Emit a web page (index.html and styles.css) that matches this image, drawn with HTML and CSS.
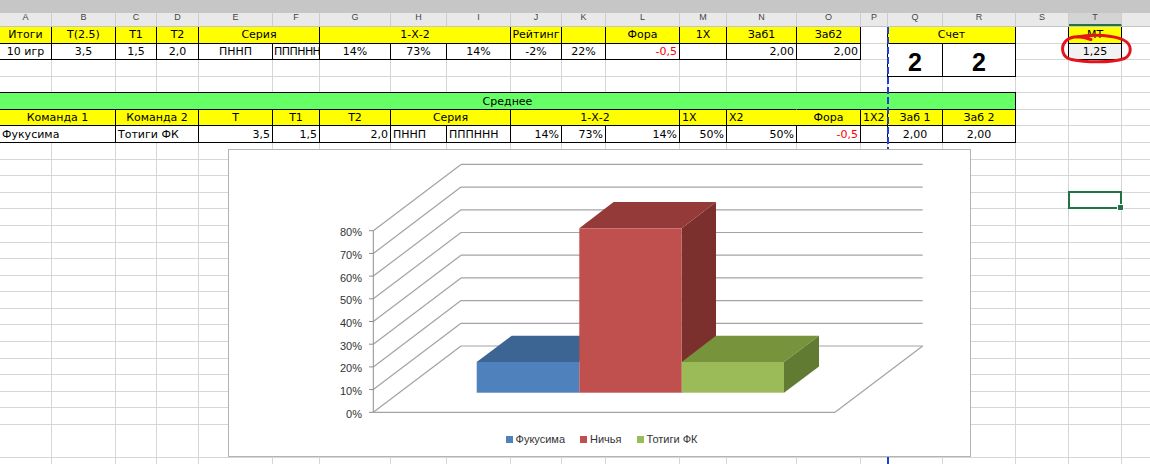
FILE: index.html
```html
<!DOCTYPE html>
<html lang="ru">
<head>
<meta charset="utf-8">
<title>Итоги</title>
<link rel="stylesheet" href="styles.css">
</head>
<body>
<div class="topbar"></div>
<div class="colhead">
  <div><span>A</span></div><div><span>B</span></div><div><span>C</span></div><div><span>D</span></div>
  <div><span>E</span></div><div><span>F</span></div><div><span>G</span></div><div><span>H</span></div>
  <div><span>I</span></div><div><span>J</span></div><div><span>K</span></div><div><span>L</span></div>
  <div><span>M</span></div><div><span>N</span></div><div><span>O</span></div><div><span>P</span></div>
  <div><span>Q</span></div><div><span>R</span></div><div><span>S</span></div><div class="hsel"><span>T</span></div>
  <div></div>
</div>
<div class="sheet">
  <div class="row row1">
    <div class="c b y">Итоги</div>
    <div class="c b y">Т(2.5)</div>
    <div class="c b y">Т1</div>
    <div class="c b y">Т2</div>
    <div class="c b y s2">Серия</div>
    <div class="c b y s3">1-Х-2</div>
    <div class="c b y">Рейтинг</div>
    <div class="c b y"></div>
    <div class="c b y">Фора</div>
    <div class="c b y">1Х</div>
    <div class="c b y">Заб1</div>
    <div class="c b y">Заб2</div>
    <div class="c"></div>
    <div class="c b y s2">Счет</div>
    <div class="c"></div>
    <div class="c b y">МТ</div>
  </div>
  <div class="row row2">
    <div class="c b">10 игр</div>
    <div class="c b">3,5</div>
    <div class="c b">1,5</div>
    <div class="c b">2,0</div>
    <div class="c b">ПННП</div>
    <div class="c b l tight">ПППННН</div>
    <div class="c b">14%</div>
    <div class="c b">73%</div>
    <div class="c b">14%</div>
    <div class="c b">-2%</div>
    <div class="c b">22%</div>
    <div class="c b r red">-0,5</div>
    <div class="c b"></div>
    <div class="c b r">2,00</div>
    <div class="c b r">2,00</div>
    <div class="c"></div>
    <div class="c b big">2</div>
    <div class="c b big">2</div>
    <div class="c"></div>
    <div class="c b gray">1,25</div>
  </div>
  <div class="row row5">
    <div class="c b g s18">Среднее</div>
  </div>
  <div class="row row6">
    <div class="c b y s2">Команда 1</div>
    <div class="c b y s2">Команда 2</div>
    <div class="c b y">Т</div>
    <div class="c b y">Т1</div>
    <div class="c b y">Т2</div>
    <div class="c b y s2">Серия</div>
    <div class="c b y s3">1-Х-2</div>
    <div class="c b y l">1Х</div>
    <div class="c b y l">Х2</div>
    <div class="c b y nl">Фора</div>
    <div class="c b y l">1Х2</div>
    <div class="c b y">Заб 1</div>
    <div class="c b y">Заб 2</div>
  </div>
  <div class="row row7">
    <div class="c b l s2">Фукусима</div>
    <div class="c b l s2">Тотиги ФК</div>
    <div class="c b r">3,5</div>
    <div class="c b r">1,5</div>
    <div class="c b r">2,0</div>
    <div class="c b l">ПННП</div>
    <div class="c b l">ПППННН</div>
    <div class="c b r">14%</div>
    <div class="c b r">73%</div>
    <div class="c b r">14%</div>
    <div class="c b r">50%</div>
    <div class="c b r">50%</div>
    <div class="c b r red">-0,5</div>
    <div class="c b"></div>
    <div class="c b">2,00</div>
    <div class="c b">2,00</div>
  </div>
  <div class="selcell"></div>

  <div class="pagebreak"></div>

  <svg class="mark" viewBox="1056 30 80 38" width="80" height="38">
    <path d="M1077 39 C1094 35.5, 1114 37.5, 1123.5 42 C1132 46, 1132.5 56, 1124.5 60.5 C1110 65, 1086 64.5, 1071.5 61.5 C1062 59.5, 1060.5 49.5, 1065 44 C1068.5 39.5, 1077 36, 1091 41.5" />
  </svg>

  <div class="chart">
    <svg class="plot" viewBox="1 1 741 280" width="741" height="280">
      <g class="walls">
        <line x1="233" y1="15.4" x2="694.7" y2="15.4"/>
        <line x1="233" y1="38.1" x2="694.7" y2="38.1"/>
        <line x1="233" y1="60.8" x2="694.7" y2="60.8"/>
        <line x1="233" y1="83.5" x2="694.7" y2="83.5"/>
        <line x1="233" y1="106.2" x2="694.7" y2="106.2"/>
        <line x1="233" y1="128.9" x2="694.7" y2="128.9"/>
        <line x1="233" y1="151.6" x2="694.7" y2="151.6"/>
        <line x1="233" y1="174.3" x2="694.7" y2="174.3"/>
        <line x1="233" y1="197" x2="694.7" y2="197"/>
        <line x1="233" y1="15.4" x2="145.3" y2="81.7"/>
        <line x1="233" y1="38.1" x2="145.3" y2="104.4"/>
        <line x1="233" y1="60.8" x2="145.3" y2="127.1"/>
        <line x1="233" y1="83.5" x2="145.3" y2="149.8"/>
        <line x1="233" y1="106.2" x2="145.3" y2="172.5"/>
        <line x1="233" y1="128.9" x2="145.3" y2="195.2"/>
        <line x1="233" y1="151.6" x2="145.3" y2="217.9"/>
        <line x1="233" y1="174.3" x2="145.3" y2="240.6"/>
        <line x1="233" y1="197" x2="145.3" y2="263.3"/>
        <line x1="145.3" y1="263.3" x2="607" y2="263.3"/>
        <line x1="694.7" y1="197" x2="607" y2="263.3"/>
      </g>
      <g class="axis">
        <line x1="145.3" y1="81.7" x2="145.3" y2="263.3"/>
        <line x1="141" y1="81.7" x2="145.3" y2="81.7"/>
        <line x1="141" y1="104.4" x2="145.3" y2="104.4"/>
        <line x1="141" y1="127.1" x2="145.3" y2="127.1"/>
        <line x1="141" y1="149.8" x2="145.3" y2="149.8"/>
        <line x1="141" y1="172.5" x2="145.3" y2="172.5"/>
        <line x1="141" y1="195.2" x2="145.3" y2="195.2"/>
        <line x1="141" y1="217.9" x2="145.3" y2="217.9"/>
        <line x1="141" y1="240.6" x2="145.3" y2="240.6"/>
        <line x1="141" y1="263.3" x2="145.3" y2="263.3"/>
      </g>
      <g class="ylabels">
        <text x="134" y="87.2">80%</text>
        <text x="134" y="109.9">70%</text>
        <text x="134" y="132.6">60%</text>
        <text x="134" y="155.3">50%</text>
        <text x="134" y="178">40%</text>
        <text x="134" y="200.7">30%</text>
        <text x="134" y="223.4">20%</text>
        <text x="134" y="246.1">10%</text>
        <text x="134" y="268.8">0%</text>
      </g>
      <g class="bars">
        <polygon class="blue-top" points="248.7,213 351.3,213 386.3,186.7 283.7,186.7"/>
        <rect class="blue-front" x="248.7" y="213" width="102.6" height="30.7"/>
        <polygon class="red-side" points="453.7,79.3 488,53 488,217.4 453.7,243.7"/>
        <polygon class="red-top" points="351.3,79.3 453.7,79.3 488,53 385.6,53"/>
        <rect class="red-front" x="351.3" y="79.3" width="102.4" height="164.4"/>
        <polygon class="green-top" points="453.7,213 556,213 591,186.7 488,186.7"/>
        <rect class="green-front" x="453.7" y="213" width="102.3" height="30.7"/>
        <polygon class="green-side" points="556,213 591,186.7 591,217.4 556,243.7"/>
      </g>
    </svg>
    <div class="legend">
      <span class="item"><i class="sw sw-blue"></i>Фукусима</span>
      <span class="item"><i class="sw sw-red"></i>Ничья</span>
      <span class="item"><i class="sw sw-green"></i>Тотиги ФК</span>
    </div>
  </div>
</div>
</body>
</html>
```
FILE: styles.css
```css
html, body {
  margin: 0;
  padding: 0;
}
body {
  width: 1150px;
  height: 464px;
  overflow: hidden;
  background: #fff;
  font-family: "DejaVu Sans", "Liberation Sans", sans-serif;
  font-size: 11px;
  color: #000;
}

.topbar {
  height: 13px;
  background: #c6c6c6;
}

.colhead {
  display: grid;
  grid-template-columns: 52px 64px 41px 42px 74px 47px 71px 56px 64px 51px 44px 74px 47px 70px 64px 27px 55px 73px 53px 53px 80px;
  height: 14px;
  box-sizing: border-box;
  background: #e9e9e9;
  border-bottom: 1px solid #c4c4c4;
  width: 1202px;
}
.colhead > div {
  box-sizing: border-box;
  border-right: 1px solid #cdcdcd;
  text-align: center;
  font-family: "Liberation Sans", sans-serif;
  font-size: 9px;
  color: #444;
}
.colhead > div > span {
  display: block;
  line-height: 11px;
  margin-top: -1px;
}
.colhead > .hsel {
  background: #d4d4d4;
  border-bottom: 2px solid #217346;
}

.sheet {
  position: relative;
  display: grid;
  grid-template-columns: 52px 64px 41px 42px 74px 47px 71px 56px 64px 51px 44px 74px 47px 70px 64px 27px 55px 73px 53px 53px 80px;
  grid-template-rows: repeat(27, 16.58px);
  width: 1202px;
  height: 437px;
  overflow: hidden;
  background-color: #fff;
  background-image:
    linear-gradient(#d6d6d6, #d6d6d6), linear-gradient(#d6d6d6, #d6d6d6), linear-gradient(#d6d6d6, #d6d6d6),
    linear-gradient(#d6d6d6, #d6d6d6), linear-gradient(#d6d6d6, #d6d6d6), linear-gradient(#d6d6d6, #d6d6d6),
    linear-gradient(#d6d6d6, #d6d6d6), linear-gradient(#d6d6d6, #d6d6d6), linear-gradient(#d6d6d6, #d6d6d6),
    linear-gradient(#d6d6d6, #d6d6d6), linear-gradient(#d6d6d6, #d6d6d6), linear-gradient(#d6d6d6, #d6d6d6),
    linear-gradient(#d6d6d6, #d6d6d6), linear-gradient(#d6d6d6, #d6d6d6), linear-gradient(#d6d6d6, #d6d6d6),
    linear-gradient(#d6d6d6, #d6d6d6), linear-gradient(#d6d6d6, #d6d6d6), linear-gradient(#d6d6d6, #d6d6d6),
    linear-gradient(#d6d6d6, #d6d6d6), linear-gradient(#d6d6d6, #d6d6d6),
    repeating-linear-gradient(to bottom, transparent 0, transparent 15.58px, #d6d6d6 15.58px, #d6d6d6 16.58px);
  background-size:
    1px 100%, 1px 100%, 1px 100%, 1px 100%, 1px 100%, 1px 100%, 1px 100%,
    1px 100%, 1px 100%, 1px 100%, 1px 100%, 1px 100%, 1px 100%, 1px 100%,
    1px 100%, 1px 100%, 1px 100%, 1px 100%, 1px 100%, 1px 100%,
    100% 100%;
  background-position:
    51px 0, 115px 0, 156px 0, 198px 0, 272px 0, 319px 0, 390px 0,
    446px 0, 510px 0, 561px 0, 605px 0, 679px 0, 726px 0, 796px 0,
    860px 0, 887px 0, 942px 0, 1015px 0, 1068px 0, 1121px 0,
    0 0;
  background-repeat: no-repeat;
}

.row { display: contents; }
.row1 > * { grid-row: 1; }
.row2 > * { grid-row: 2; }
.row5 > * { grid-row: 5; }
.row6 > * { grid-row: 6; }
.row7 > * { grid-row: 7; }
.row2 > .big { grid-row: 2 / span 2; }

.c {
  display: flex;
  align-items: center;
  justify-content: center;
  padding: 0 2px;
  white-space: nowrap;
  overflow: hidden;
  min-width: 0;
  line-height: 13px;
}
.b {
  border: 1px solid #000;
  margin: -1px 0 0 -1px;
  background: #fff;
}
.y { background: #ffff00; }
.g { background: #66ff66; }
.gray { background: #f2f2f2; }
.l { justify-content: flex-start; }
.r { justify-content: flex-end; }
.red { color: #ff0000; }
.nl { border-left-color: transparent; }
.tight { letter-spacing: -0.55px; padding-left: 1px; padding-right: 0; }
.s2 { grid-column: span 2; }
.s3 { grid-column: span 3; }
.s18 { grid-column: span 18; }

.big {
  align-items: flex-end;
  font-family: "Liberation Sans", sans-serif;
  font-weight: bold;
  font-size: 25px;
  line-height: 27px;
  padding-bottom: 0;
}

.selcell {
  grid-row: 11;
  grid-column: 20;
  position: relative;
  border: 2px solid #217346;
  margin: -2px 0 0 -1px;
}
.selcell::after {
  content: "";
  position: absolute;
  right: -4px;
  bottom: -4px;
  width: 5px;
  height: 5px;
  background: #217346;
  border: 1px solid #fff;
}

.pagebreak {
  position: absolute;
  left: 887px;
  top: 0;
  width: 2px;
  height: 100%;
  background: repeating-linear-gradient(to bottom, #1f3fd8 0, #1f3fd8 7px, transparent 7px, transparent 10px);
  z-index: 2;
}

.mark {
  position: absolute;
  left: 1056px;
  top: 1px;
  z-index: 4;
  overflow: visible;
}
.mark path {
  fill: none;
  stroke: #e3141c;
  stroke-width: 3;
  stroke-linecap: round;
  stroke-linejoin: round;
}

.chart {
  position: absolute;
  left: 228px;
  top: 122px;
  width: 743px;
  height: 308px;
  box-sizing: border-box;
  border: 1px solid #b4b4b4;
  background: #fff;
  z-index: 3;
  display: flex;
  flex-direction: column;
}
.plot {
  display: block;
  flex: none;
}
.walls line {
  stroke: #a3a3a3;
  stroke-width: 1.2;
}
.axis line {
  stroke: #8e8e8e;
  stroke-width: 1;
}
.ylabels text {
  font-family: "Liberation Sans", sans-serif;
  font-size: 11px;
  fill: #333;
  text-anchor: end;
}
.blue-top { fill: #3d6594; }
.blue-front { fill: #4f81bd; }
.red-side { fill: #7b302e; }
.red-top { fill: #943a38; }
.red-front { fill: #c0504d; }
.green-top { fill: #77933c; }
.green-front { fill: #9bbb59; }
.green-side { fill: #627b32; }

.legend {
  display: flex;
  justify-content: center;
  gap: 15px;
  height: 18px;
  line-height: 18px;
  font-family: "Liberation Sans", sans-serif;
  font-size: 11px;
  color: #333;
  padding-left: 4px;
}
.legend .item {
  display: flex;
  align-items: center;
  gap: 3px;
}
.sw {
  display: block;
  width: 7px;
  height: 7px;
}
.sw-blue { background: #4f81bd; }
.sw-red { background: #c0504d; }
.sw-green { background: #9bbb59; }
```
